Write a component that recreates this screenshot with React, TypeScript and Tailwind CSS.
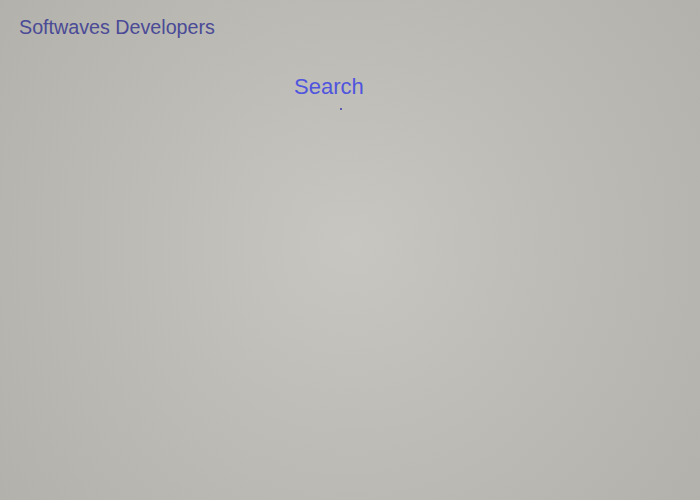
export default function App() {
  return (
    <div
      className="h-[500px] w-[700px] overflow-hidden bg-[radial-gradient(circle_at_50%_49%,#c7c6c0_0%,#bdbcb6_45%,#b2b1ab_100%)]"
      style={{ fontFamily: '"Liberation Sans", Arial, sans-serif' }}
    >
      <header className="pl-[19px] pt-[14px]">
        <h1 className="text-[19.7px] leading-[26px] text-[#4a4a96]">Softwaves Developers</h1>
      </header>
      <main className="flex flex-col pl-[294px] pt-[33px]">
        <h2 className="text-[22px] leading-[28px] text-[#4f55de]">Search</h2>
        <div className="ml-[46px] mt-[7px] h-[2px] w-[2px] bg-[#5a5ab0]" />
      </main>
    </div>
  );
}
